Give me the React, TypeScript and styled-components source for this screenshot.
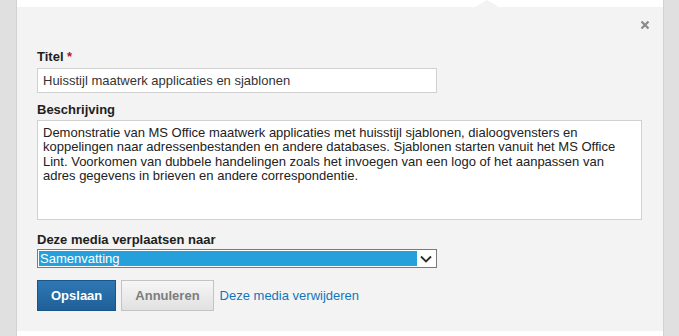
import React from 'react';
import styled, { createGlobalStyle } from 'styled-components';

const GlobalStyle = createGlobalStyle`
  html, body {
    margin: 0;
    padding: 0;
    background: #e0e0e0;
    font-family: "Liberation Sans", Arial, sans-serif;
  }
`;

const Page = styled.div`
  display: flex;
  padding: 0 15px 0 16px;
  min-height: 336px;
  background: #e0e0e0;
`;

const Card = styled.div`
  flex: 1;
  background: #fff;
  border-left: 1px solid #d2d2d2;
  border-right: 1px solid #d2d2d2;
  padding-top: 7px;
`;

const Panel = styled.div`
  position: relative;
  background: #f3f3f3;
  padding: 41px 20px 20px;
`;

const Notch = styled.div`
  position: absolute;
  top: -7px;
  left: 458px;
  width: 0;
  height: 0;
  border-left: 12px solid transparent;
  border-right: 12px solid transparent;
  border-bottom: 7px solid #f3f3f3;
`;

const CloseButton = styled.button`
  position: absolute;
  top: 13px;
  right: 13px;
  width: 10px;
  height: 10px;
  padding: 0;
  border: 0;
  background: none;
  cursor: pointer;
  display: flex;
`;

const Field = styled.div<{ $gap?: number }>`
  margin-bottom: ${(p) => p.$gap ?? 8}px;
`;

const Label = styled.label<{ $space?: number }>`
  display: block;
  font-size: 13px;
  line-height: 17px;
  font-weight: bold;
  color: #1e1e1e;
  margin-bottom: ${(p) => p.$space ?? 3}px;
`;

const Required = styled.span`
  color: #b0171f;
`;

const TextInput = styled.input`
  box-sizing: border-box;
  display: block;
  width: 400px;
  height: 25px;
  margin: 0;
  padding: 0 5px;
  border: 1px solid #d0d0d0;
  background: #fff;
  font-family: "Liberation Sans", Arial, sans-serif;
  font-size: 13px;
  color: #333;
  outline: none;
`;

const TextArea = styled.textarea`
  box-sizing: border-box;
  display: block;
  width: 605px;
  height: 100px;
  margin: 0;
  padding: 5px 2px 5px 5px;
  border: 1px solid #d0d0d0;
  background: #fff;
  font-family: "Liberation Sans", Arial, sans-serif;
  font-size: 13px;
  line-height: 14.3px;
  color: #222;
  resize: none;
  outline: none;
  overflow: hidden;
`;

const SelectBox = styled.div`
  box-sizing: border-box;
  display: flex;
  align-items: stretch;
  width: 400px;
  height: 19px;
  padding: 1px;
  border: 1px solid #7a7a7a;
  background: #fff;
`;

const SelectValue = styled.div`
  flex: 1;
  background: #26a0da;
  color: #fff;
  font-size: 13px;
  line-height: 15px;
  padding-left: 1px;
`;

const SelectArrow = styled.div`
  width: 18px;
  display: flex;
  align-items: center;
  justify-content: center;
`;

const Actions = styled.div`
  display: flex;
  align-items: center;
  gap: 5px;
`;

const Button = styled.button<{ $primary?: boolean }>`
  box-sizing: border-box;
  height: 31px;
  margin: 0;
  padding: 0 13px;
  font-family: "Liberation Sans", Arial, sans-serif;
  font-size: 13px;
  font-weight: bold;
  cursor: pointer;
  border: 1px solid ${(p) => (p.$primary ? '#1b5585' : '#c3c3c3')};
  color: ${(p) => (p.$primary ? '#fff' : '#7d7d7d')};
  background: ${(p) =>
    p.$primary
      ? 'linear-gradient(#2f78b5, #1f5f98)'
      : 'linear-gradient(#f6f6f6, #e1e1e1)'};
`;

const TextLink = styled.a`
  margin-left: 1px;
  font-size: 13px;
  color: #0e78bd;
  text-decoration: none;
`;

const description =
  'Demonstratie van MS Office maatwerk applicaties met huisstijl sjablonen, dialoogvensters en koppelingen naar adressenbestanden en andere databases. Sjablonen starten vanuit het MS Office Lint. Voorkomen van dubbele handelingen zoals het invoegen van een logo of het aanpassen van adres gegevens in brieven en andere correspondentie.';

const App: React.FC = () => {
  return (
    <>
      <GlobalStyle />
      <Page>
        <Card>
          <Panel>
            <Notch />
            <CloseButton aria-label="Sluiten">
              <svg width="10" height="10" viewBox="0 0 10 10">
                <path d="M1.5 1.5 L8.5 8.5 M8.5 1.5 L1.5 8.5" stroke="#8a8a8a" strokeWidth="2.2" />
              </svg>
            </CloseButton>

            <Field $gap={8}>
              <Label>
                Titel <Required>*</Required>
              </Label>
              <TextInput defaultValue="Huisstijl maatwerk applicaties en sjablonen" />
            </Field>

            <Field $gap={11}>
              <Label $space={2}>Beschrijving</Label>
              <TextArea defaultValue={description} />
            </Field>

            <Field $gap={12}>
              <Label $space={1}>Deze media verplaatsen naar</Label>
              <SelectBox>
                <SelectValue>Samenvatting</SelectValue>
                <SelectArrow>
                  <svg width="12" height="8" viewBox="0 0 12 8">
                    <path d="M1 1.5 L6 6.5 L11 1.5" fill="none" stroke="#2b2b2b" strokeWidth="1.8" />
                  </svg>
                </SelectArrow>
              </SelectBox>
            </Field>

            <Actions>
              <Button $primary>Opslaan</Button>
              <Button>Annuleren</Button>
              <TextLink href="#">Deze media verwijderen</TextLink>
            </Actions>
          </Panel>
        </Card>
      </Page>
    </>
  );
};

export default App;
